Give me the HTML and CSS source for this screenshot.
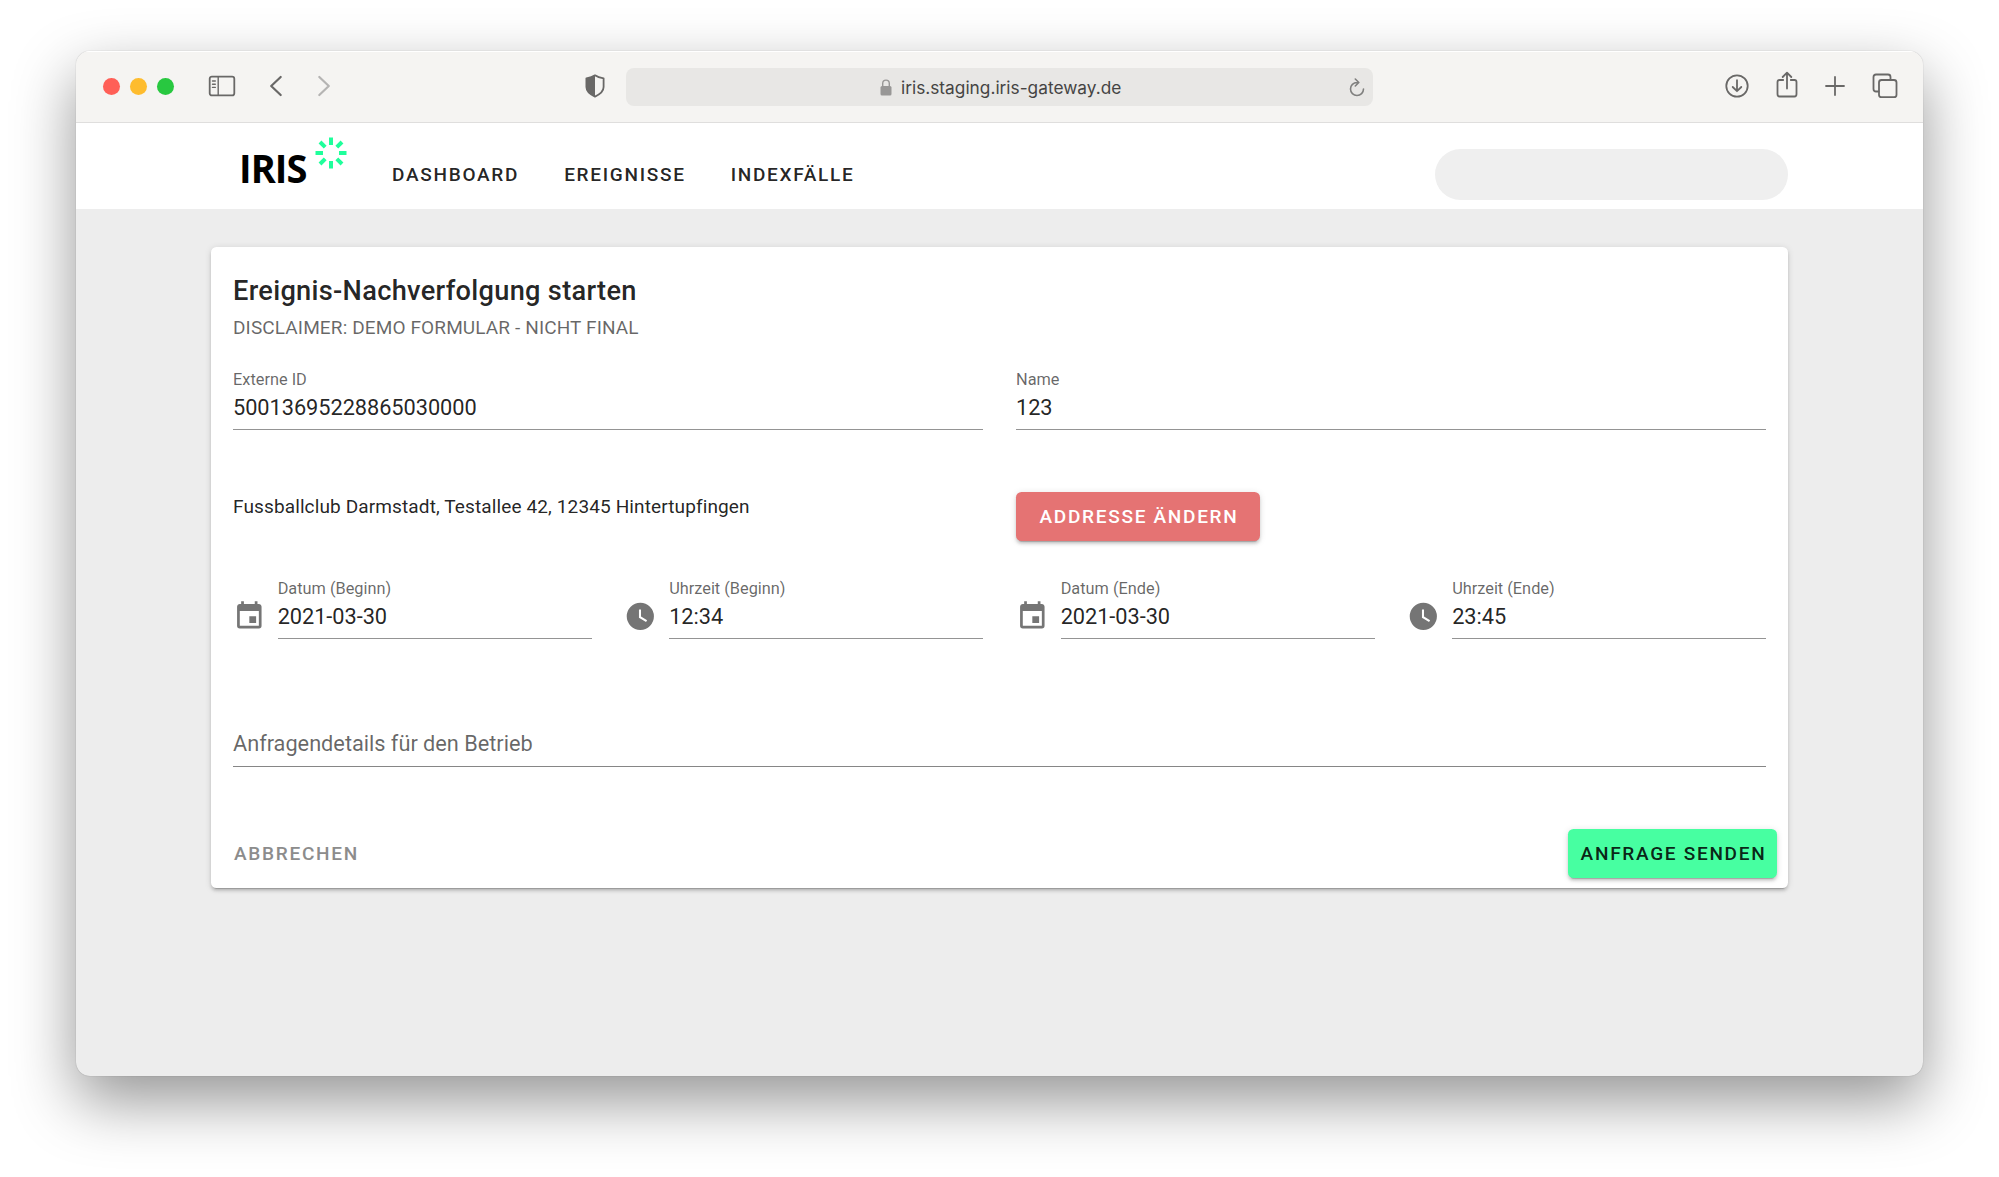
FILE: index.html
```html
<!DOCTYPE html>
<html lang="de">
<head>
<meta charset="utf-8">
<title>IRIS – Ereignis-Nachverfolgung</title>
<link rel="stylesheet" href="styles.css">
</head>
<body>
<svg class="sprite" aria-hidden="true">
  <symbol id="calendar" viewBox="0 0 24 24"><path d="M19 19H5V8H19M16 1V3H8V1H6V3H5C3.89 3 3 3.89 3 5V19A2 2 0 0 0 5 21H19A2 2 0 0 0 21 19V5C21 3.89 20.1 3 19 3H18V1M17 12H12V17H17V12Z"/></symbol>
  <symbol id="clock" viewBox="0 0 24 24"><path d="M12 2A10 10 0 0 0 2 12A10 10 0 0 0 12 22A10 10 0 0 0 22 12A10 10 0 0 0 12 2M16.2 16.2L11 13V7H12.5V12.2L17 14.9L16.2 16.2Z"/></symbol>
</svg>
<div class="window">
  <div class="toolbar">
    <div class="lights"><i class="red"></i><i class="yellow"></i><i class="green"></i></div>
    <svg class="tool sidebar" width="28" height="22" viewBox="0 0 28 22"><rect x="1.7" y="1.6" width="24.6" height="18.8" rx="2.2"/><path d="M10.2 1.6V20.4M4.500 6H7.300M4.500 9.200H7.300M4.500 12.400H7.300"/></svg>
    <svg class="tool back" width="14" height="22" viewBox="0 0 14 22"><path d="M11.7 2L2.2 11L11.7 20"/></svg>
    <svg class="tool forward" width="14" height="22" viewBox="0 0 14 22"><path d="M2.3 2L11.8 11L2.3 20"/></svg>
    <svg class="tool shield" width="20" height="24" viewBox="0 0 20 24"><path d="M10 1.3C7.5 3 4.5 3.8 1.4 4.3V13C1.4 17.5 5.5 20.5 10 22.6C14.5 20.5 18.6 17.5 18.6 13V4.3C15.5 3.8 12.5 3 10 1.3Z"/><path class="fill" d="M10 1.3C7.5 3 4.5 3.8 1.4 4.3V13C1.4 17.5 5.5 20.5 10 22.6Z"/></svg>
    <div class="address">
      <svg class="lock" width="12" height="17" viewBox="0 0 12 17"><rect x="0.5" y="7" width="11" height="9.5" rx="1.5"/><path d="M2.7 7.5V4.5C2.7 0 9.3 0 9.3 4.5V7.5"/></svg>
      <span>iris.staging.iris-gateway.de</span>
      <svg class="tool reload" width="16" height="19" viewBox="0 0 16 19"><path d="M9.5 4.5H8A6.5 6.5 0 1 0 14.5 11M6.3 1L9.8 4.5L6.3 8"/></svg>
    </div>
    <svg class="tool download" width="24" height="24" viewBox="0 0 24 24"><circle cx="12" cy="12" r="10.7"/><path d="M12 6.2V17M7.7 13L12 17.2L16.3 13"/></svg>
    <svg class="tool share" width="22" height="27" viewBox="0 0 22 27"><path d="M7.2 9H3.5Q1.5 9 1.5 11V23Q1.5 25.5 3.5 25.5H18.5Q20.5 25.5 20.5 23V11Q20.5 9 18.5 9H14.8M11 17.5V2M6.7 6L11 1.7L15.3 6"/></svg>
    <svg class="tool plus" width="20" height="20" viewBox="0 0 20 20"><path d="M10 1V19M1 10H19"/></svg>
    <svg class="tool tabs" width="26" height="26" viewBox="0 0 26 26"><path d="M6.500 18.500H4Q1.500 18.500 1.500 16V4Q1.500 1.500 4 1.500H16Q18.500 1.500 18.500 4V7"/><rect x="7" y="7" width="17.500" height="17.200" rx="2.500"/></svg>
  </div>
  <header class="appbar">
    <div class="logo"><span>IRIS</span>
      <svg width="32" height="32" viewBox="-16 -16 32 32"><path d="M0-15.5V-8M0 15.5V8M-15.5 0H-8M15.5 0H8M-11-11L-5.8-5.8M11 11L5.8 5.8M-11 11L-5.8 5.8M11-11L5.8-5.8"/></svg>
    </div>
    <nav><a>DASHBOARD</a><a>EREIGNISSE</a><a>INDEXFÄLLE</a></nav>
    <div class="user"></div>
  </header>
  <main>
    <form class="card">
      <h1>Ereignis-Nachverfolgung starten</h1>
      <p class="subtitle">DISCLAIMER: DEMO FORMULAR - NICHT FINAL</p>
      <div class="row two ids">
        <div class="field"><label>Externe ID</label><div class="value">50013695228865030000</div></div>
        <div class="field"><label>Name</label><div class="value">123</div></div>
      </div>
      <div class="row two location">
        <p>Fussballclub Darmstadt, Testallee 42, 12345 Hintertupfingen</p>
        <button type="button" class="btn change">ADDRESSE ÄNDERN</button>
      </div>
      <div class="row four">
        <div class="picker"><svg><use href="#calendar"/></svg><div class="field"><label>Datum (Beginn)</label><div class="value">2021-03-30</div></div></div>
        <div class="picker time"><svg><use href="#clock"/></svg><div class="field"><label>Uhrzeit (Beginn)</label><div class="value">12:34</div></div></div>
        <div class="picker"><svg><use href="#calendar"/></svg><div class="field"><label>Datum (Ende)</label><div class="value">2021-03-30</div></div></div>
        <div class="picker time"><svg><use href="#clock"/></svg><div class="field"><label>Uhrzeit (Ende)</label><div class="value">23:45</div></div></div>
      </div>
      <div class="details">Anfragendetails für den Betrieb</div>
      <div class="actions">
        <button type="button" class="btn cancel">ABBRECHEN</button>
        <button type="button" class="btn send">ANFRAGE SENDEN</button>
      </div>
    </form>
  </main>
</div>
</body>
</html>
```
FILE: styles.css
```css
* { box-sizing: border-box; }
body { margin: 0; height: 1177px; padding: 51px 76px 0; background: #fff; font-family: Roboto, sans-serif; color: rgba(0,0,0,.87); overflow: hidden; }
h1, p { margin: 0; }
.sprite { position: absolute; width: 0; height: 0; }
.window { width: 1847px; height: 1025px; border-radius: 14px; overflow: hidden; background: #ededed; display: flex; flex-direction: column; box-shadow: 0 0 1px rgba(0,0,0,.35), 0 25px 62px rgba(0,0,0,.42); }

.toolbar { height: 72px; flex: none; background: #f5f4f2; border-bottom: 1px solid #dfdedd; display: flex; align-items: center; padding: 0 25px 2px 27px; border-top: 1px solid #fff; }
.lights { display: flex; gap: 10px; }
.lights i { width: 17px; height: 17px; border-radius: 50%; }
.red { background: #ff5f57; }
.yellow { background: #febc2e; }
.green { background: #28c840; }
.tool { fill: none; stroke: #696867; stroke-width: 1.8; stroke-linecap: round; stroke-linejoin: round; flex: none; }
.sidebar { margin-left: 34px; }
.sidebar path { stroke-width: 1.4; }
.back { margin-left: 33px; stroke-width: 2.2; }
.forward { margin-left: 34px; stroke: #b5b4b3; stroke-width: 2.2; }
.shield { margin-left: 254px; }
.shield .fill { fill: #696867; stroke: none; }
.address { flex: none; width: 747px; height: 38px; margin: 2px 0 0 21px; border-radius: 8px; background: #e8e7e5; display: flex; align-items: center; padding: 0 8px 0 254px; font: 17.3px Inter, sans-serif; color: #454443; }
.lock { margin-right: 9px; fill: #989796; }
.lock path { fill: none; stroke: #989796; stroke-width: 1.4; }
.reload { margin-left: auto; stroke: #80807f; stroke-width: 1.6; }
.download { margin-left: auto; }
.share { margin-left: 27px; margin-top: -4px; }
.plus { margin-left: 27px; }
.tabs { margin-left: 27px; }

.appbar { height: 86px; flex: none; background: #fff; display: flex; align-items: center; padding: 16px 135px 0 163px; }
.logo { display: flex; width: 108px; height: 70px; align-items: flex-start; justify-content: space-between; }
.logo span { font: bold 40px/40px "Open Sans", sans-serif; letter-spacing: -1px; color: #000; transform: scaleX(.95); transform-origin: left; margin: 9px -12px 0 0; }
.logo svg { margin-top: -2px; fill: none; stroke: #1fff9b; stroke-width: 4; }
nav { display: flex; gap: 45px; margin: 2px 0 0 45px; }
nav a { font-size: 19.05px; font-weight: 500; letter-spacing: 1.7px; line-height: 24px; color: rgba(0,0,0,.87); }
.user { width: 353px; height: 51px; border-radius: 26px; background: #efefef; margin-left: auto; }

main { padding: 38px 135px 0; }
.card { height: 641px; background: #fff; border-radius: 5.5px; padding: 23px 22px 0; box-shadow: 0 4px 1px -3px rgba(0,0,0,.2), 0 3px 3px rgba(0,0,0,.14), 0 1px 7px rgba(0,0,0,.12); }
h1 { font-size: 27.2px; font-weight: 500; letter-spacing: .3px; line-height: 43px; }
.subtitle { font-size: 19.05px; line-height: 30px; letter-spacing: .11px; color: rgba(0,0,0,.6); }
.row { display: grid; column-gap: 33px; }
.two { grid-template-columns: 1fr 1fr; }
.four { grid-template-columns: repeat(4, 1fr); }
.ids { margin-top: 26px; }
.field { height: 61px; border-bottom: 1px solid #949494; flex: 1; }
.field label { display: block; font-size: 16.33px; line-height: 22px; color: rgba(0,0,0,.6); }
.value { font-size: 21.77px; line-height: 32px; letter-spacing: -.05px; margin-top: 1px; }
.location { height: 86px; margin-top: 62px; align-items: start; }
.location p { font-size: 19.05px; line-height: 30px; letter-spacing: .11px; }
.btn { font: 500 19.05px/49px Roboto, sans-serif; letter-spacing: 1.7px; height: 49px; border: 0; border-radius: 5.5px; padding: 0; text-align: center; }
.change { width: 244px; background: #e57373; color: #fff; }
.change, .send { padding-left: 2px; box-shadow: 0 4px 1px -3px rgba(0,0,0,.2), 0 3px 3px rgba(0,0,0,.14), 0 1px 7px rgba(0,0,0,.12); }
.picker { display: flex; }
.picker > svg { width: 32.65px; height: 32.65px; margin: 22px 12px 0 0; fill: #757575; flex: none; }
.time > svg { margin: 22px 13px 0 -1px; }
.details { height: 43px; margin-top: 85px; border-bottom: 1px solid #868686; font-size: 21.77px; line-height: 40px; letter-spacing: -.03px; color: rgba(0,0,0,.6); }
.actions { margin: 62px -11px 0 1px; display: flex; justify-content: space-between; }
.cancel { background: none; color: #8c8c8c; }
.send { width: 209px; background: #47ffa1; color: rgba(0,0,0,.87); }
```
